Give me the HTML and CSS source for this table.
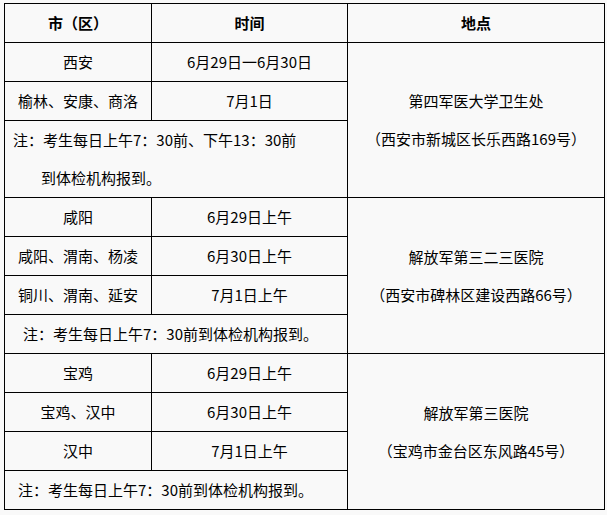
FILE: index.html
```html
<!DOCTYPE html>
<html lang="zh-CN">
<head>
<meta charset="utf-8">
<title>体检安排</title>
<link rel="stylesheet" href="styles.css">
</head>
<body>
<table class="schedule">
  <colgroup>
    <col class="c-city">
    <col class="c-time">
    <col class="c-place">
  </colgroup>
  <thead>
    <tr>
      <th>市（区）</th>
      <th>时间</th>
      <th>地点</th>
    </tr>
  </thead>
  <tbody>
    <tr>
      <td>西安</td>
      <td>6月29日一6月30日</td>
      <td class="place" rowspan="3"><span class="line">第四军医大学卫生处</span><span class="line">（西安市新城区长乐西路169号）</span></td>
    </tr>
    <tr>
      <td>榆林、安康、商洛</td>
      <td>7月1日</td>
    </tr>
    <tr>
      <td class="note note-a" colspan="2"><span class="line">注：考生每日上午7：30前、下午13：30前</span><span class="line indent">到体检机构报到。</span></td>
    </tr>
    <tr>
      <td>咸阳</td>
      <td>6月29日上午</td>
      <td class="place" rowspan="4"><span class="line">解放军第三二三医院</span><span class="line">（西安市碑林区建设西路66号）</span></td>
    </tr>
    <tr>
      <td>咸阳、渭南、杨凌</td>
      <td>6月30日上午</td>
    </tr>
    <tr>
      <td>铜川、渭南、延安</td>
      <td>7月1日上午</td>
    </tr>
    <tr>
      <td class="note note-b" colspan="2">注：考生每日上午7：30前到体检机构报到。</td>
    </tr>
    <tr>
      <td>宝鸡</td>
      <td>6月29日上午</td>
      <td class="place" rowspan="4"><span class="line">解放军第三医院</span><span class="line">（宝鸡市金台区东风路45号）</span></td>
    </tr>
    <tr>
      <td>宝鸡、汉中</td>
      <td>6月30日上午</td>
    </tr>
    <tr>
      <td>汉中</td>
      <td>7月1日上午</td>
    </tr>
    <tr>
      <td class="note note-c" colspan="2">注：考生每日上午7：30前到体检机构报到。</td>
    </tr>
  </tbody>
</table>
</body>
</html>
```

FILE: styles.css
```css
html, body {
  background: #f9f9f9;
}
body {
  margin: 0;
  padding: 3px 0 0 4px;
  font-family: "Noto Sans CJK SC", "Noto Sans", sans-serif;
  font-size: 15px;
  color: #000;
}
.schedule {
  border-collapse: collapse;
  table-layout: fixed;
  width: 600px;
}
.c-city { width: 147px; }
.c-time { width: 196px; }
.c-place { width: 257px; }
.schedule th,
.schedule td {
  border: 1px solid #000;
  padding: 0;
  height: 38px;
  line-height: 38px;
  text-align: center;
  vertical-align: middle;
  white-space: nowrap;
}
.schedule th {
  font-weight: bold;
}
.line {
  display: block;
}
.schedule td.note {
  text-align: left;
}
.schedule td.note-a { padding-left: 8px; }
.note-a .indent { padding-left: 28px; }
.schedule td.note-b { padding-left: 18px; }
.schedule td.note-c { padding-left: 13px; }
.place .line {
  line-height: 38px;
}
```
